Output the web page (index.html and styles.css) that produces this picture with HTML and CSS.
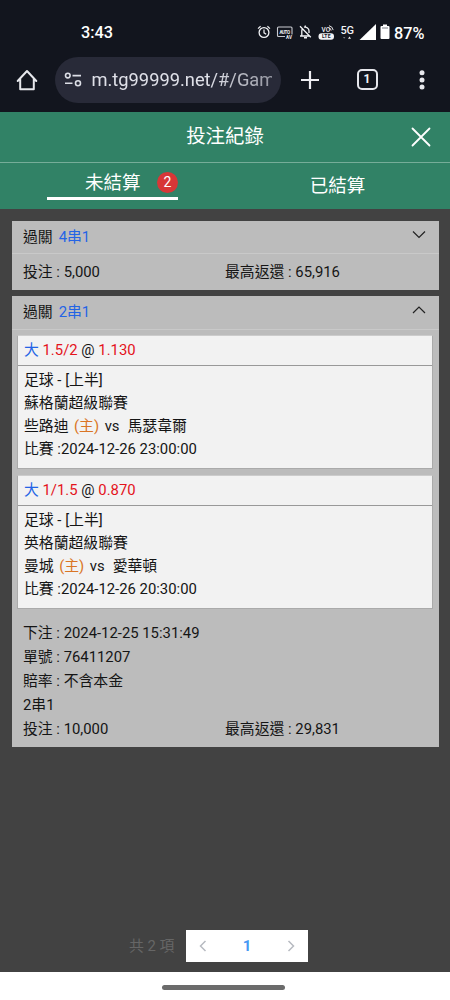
FILE: index.html
```html
<!DOCTYPE html>
<html lang="zh-Hant">
<head>
<meta charset="utf-8">
<title>投注紀錄</title>
<link rel="stylesheet" href="styles.css">
</head>
<body>
<div class="phone">
  <div class="status">
    <span class="clock">3:43</span>
    <svg class="status-icons" width="134" height="20" viewBox="0 0 134 20" fill="none" stroke="#f2f3f6">
      <circle cx="7" cy="10.500" r="4.900" stroke-width="1.300"/>
      <path d="M7 7.600v3.200l2.200 1.400M1 6.600l2.600-2.300M13 6.600l-2.600-2.300" stroke-width="1.200"/>
      <path d="M28 14.500H21.500q-1 0-1-1V6q0-1 1-1h12.500q1 0 1 1v6.500" stroke-width="1.100" stroke="#c9cbd1"/>
      <text x="22.500" y="11.600" class="tiny" textLength="10.500">AUTO</text>
      <text x="29" y="17" class="tiny" textLength="6">AV</text>
      <path d="M43 14h9.500M44.800 13.700V9c0-1.100.4-2 1-2.600M47 5.200c2.600-.6 5 1.200 5 3.800v2M48.300 3.500v1.400M43 4.300l10.800 11" stroke-width="1.300"/>
      <path d="M47 15.700h3" stroke-width="1.600"/>
      <text x="64.500" y="10.400" class="vo">VO</text>
      <path d="M71.500 5.700q2.300.3 2.700 2.800M72 3.700q3.500.6 4.200 4.400" stroke-width=".9"/>
      <rect x="61.500" y="11.300" width="15.500" height="6.400" rx="3" fill="#f2f3f6" stroke="none"/>
      <text x="65" y="16.400" class="lte" textLength="8.500">LTE</text>
      <text x="83.500" y="12" class="fiveg" textLength="13.500">5G</text>
      <path d="M86 15h2.400l-1.200 1.700z" fill="#777b83" stroke="none"/>
      <path d="M91 16.800h3l-1.500-2.200z" fill="#f2f3f6" stroke="none"/>
      <path d="M102.500 18L119 2v16z" fill="#fff" stroke="none"/>
      <path d="M126 2.500h4v1.600h1.500q1 0 1 1V16q0 1-1 1h-7q-1 0-1-1V5.100q0-1 1-1h1.500z" fill="#fff" stroke="none"/>
      <path d="M125 6h6" stroke="#777b83" stroke-width="1"/>
    </svg>
    <span class="percent">87%</span>
  </div>
  <div class="browser">
    <svg class="home" width="24" height="24" viewBox="0 0 24 24" fill="none" stroke="#e6e7ec" stroke-width="2" stroke-linejoin="round"><path d="M2.700 13L12 3l9.300 10M5.200 11v10.300h13.600V11" stroke-linecap="round"/></svg>
    <div class="address">
      <svg width="18" height="16" viewBox="0 0 18 16" fill="none" stroke="#dcdee6" stroke-width="1.600"><circle cx="3.800" cy="3.600" r="2.300"/><path d="M8.500 3.600H17M1 11.300h7.500"/><circle cx="14" cy="11.300" r="2.500"/></svg>
      <span class="url">m.tg99999.net/#/Gam</span>
    </div>
    <svg class="plus" width="20" height="20" viewBox="0 0 20 20" stroke="#eeeef2" stroke-width="2.200"><path d="M10 1v18M1 10h18"/></svg>
    <div class="tabcount">1</div>
    <svg class="dots" width="6" height="20" viewBox="0 0 6 20" fill="#e6e7ec"><circle cx="3" cy="2.800" r="2.500"/><circle cx="3" cy="9.900" r="2.500"/><circle cx="3" cy="17" r="2.500"/></svg>
  </div>
  <header class="title">
    <h1>投注紀錄</h1>
    <svg class="close" width="20" height="20" viewBox="0 0 20 20" stroke="#fff" stroke-width="1.800" stroke-linecap="round"><path d="M1.500 1.500l17 17M18.500 1.500l-17 17"/></svg>
  </header>
  <nav class="tabs">
    <div class="tab"><div class="tab-active"><span>未結算</span><b class="badge">2</b></div></div>
    <div class="tab tab-idle">已結算</div>
  </nav>
  <main class="content">
    <section class="card">
      <div class="card-head"><span>過關</span><span class="blue">4串1</span>
        <svg class="chevron" width="14" height="10" viewBox="0 0 14 10"><path d="M1 1.500L7 7.500 13 1.500"/></svg></div>
      <div class="stake"><span>投注 : 5,000</span><span>最高返還 : 65,916</span></div>
    </section>
    <section class="card">
      <div class="card-head card-head-open"><span>過關</span><span class="blue">2串1</span>
        <svg class="chevron" width="14" height="10" viewBox="0 0 14 10"><path d="M1 8L7 2 13 8"/></svg></div>
      <div class="tickets">
        <article class="ticket">
          <div class="pick"><span class="blue">大</span> <span class="red">1.5/2</span> @ <span class="red">1.130</span></div>
          <div class="match">
            <p>足球 - [上半]</p>
            <p>蘇格蘭超級聯賽</p>
            <p>些路迪<span class="host">(主)</span>vs<span class="away">馬瑟韋爾</span></p>
            <p>比賽 :2024-12-26 23:00:00</p>
          </div>
        </article>
        <article class="ticket">
          <div class="pick"><span class="blue">大</span> <span class="red">1/1.5</span> @ <span class="red">0.870</span></div>
          <div class="match">
            <p>足球 - [上半]</p>
            <p>英格蘭超級聯賽</p>
            <p>曼城<span class="host">(主)</span>vs<span class="away">愛華頓</span></p>
            <p>比賽 :2024-12-26 20:30:00</p>
          </div>
        </article>
      </div>
      <div class="details">
        <p>下注 : 2024-12-25 15:31:49</p>
        <p>單號 : 76411207</p>
        <p>賠率 : 不含本金</p>
        <p>2串1</p>
        <p class="totals"><span>投注 : 10,000</span><span>最高返還 : 29,831</span></p>
      </div>
    </section>
  </main>
  <footer class="pager">
    <span class="count">共 2 項</span>
    <div class="pages">
      <svg width="8" height="12" viewBox="0 0 8 12"><path d="M6.500 1L1.500 6l5 5"/></svg>
      <b>1</b>
      <svg width="8" height="12" viewBox="0 0 8 12"><path d="M1.500 1l5 5-5 5"/></svg>
    </div>
  </footer>
  <div class="gesture"><div class="handle"></div></div>
</div>
</body>
</html>
```
FILE: styles.css
```css
* { box-sizing: border-box; }
body, p, h1 { margin: 0; }
body {
  background: #424242;
  color: #151515;
  font-family: Roboto, "Noto Sans CJK TC", sans-serif;
  font-size: 14.850px;
}
.phone { width: 450px; height: 1000px; display: flex; flex-direction: column; overflow: hidden; }
svg { flex: none; display: block; }

.status { height: 52px; background: #12151e; color: #fff; display: flex; align-items: center; padding: 12px 0 0 81px; }
.clock { width: 176px; padding-top: 1px; font: 500 16.300px/20px Roboto, sans-serif; }
.percent { margin-left: 3px; padding-top: 2px; font-size: 16.300px; font-weight: 500; }
.tiny { font: 700 4.500px Roboto, sans-serif; fill: #f2f3f6; stroke: none; }
.vo { font: 500 6.500px Roboto, sans-serif; fill: #f2f3f6; stroke: none; }
.lte { font: 700 5px Roboto, sans-serif; fill: #12151e; stroke: none; }
.fiveg { font: 500 11px Roboto, sans-serif; fill: #f2f3f6; stroke: none; }

.browser { height: 60px; background: #12151e; display: flex; align-items: center; padding: 0 0 5px 15px; }
.address { width: 226px; height: 46px; margin-left: 15.500px; padding: 0 9px; border-radius: 23px; background: #282a38; display: flex; align-items: center; gap: 10px; color: #dfe0e8; }
.url { width: 180px; overflow: hidden; white-space: nowrap; font-size: 18.300px; line-height: 26px; -webkit-mask-image: linear-gradient(90deg, #000 65%, rgba(0, 0, 0, .6)); }
.plus { margin-left: 19.500px; }
.tabcount { width: 21px; height: 21px; margin-left: 36.500px; border: 2px solid #e6e7ec; border-radius: 5px; color: #f3f3f6; font: 700 12px/17px Roboto, sans-serif; text-align: center; }
.dots { margin-left: 41.500px; }

.title { height: 51px; background: #318266; border-bottom: 1.500px solid #76ad99; color: #fff; display: grid; grid-template-columns: 1fr auto 1fr; align-items: center; }
.title h1 { grid-column: 2; font-size: 19.400px; font-weight: 400; line-height: 28px; padding-bottom: 1px; }
.close { justify-self: end; margin-right: 19.500px; }
.tabs { height: 46px; background: #318266; color: #fff; font-size: 18.500px; display: grid; grid-template-columns: 1fr 1fr; }
.tab { display: flex; justify-content: center; }
.tab-active { width: 131px; height: 37px; border-bottom: 3px solid #fff; display: flex; align-items: center; padding: 4px 0 0 38px; }
.tab-active span { padding-bottom: 2px; }
.tab-idle { line-height: 46px; }
.badge { width: 21px; height: 21px; margin-left: auto; border-radius: 50%; background: #d73737; font-size: 14px; font-weight: 400; line-height: 21px; text-align: center; }

.content { flex: 1; padding: 11.500px 11px 0 12px; }
.card { background: #bcbcbc; margin-bottom: 6px; }
.card-head { height: 33.500px; border-bottom: 1px solid #c9c9c9; display: flex; align-items: center; gap: 6px; padding: 0 13px 2px 11px; }
.card-head-open { padding-bottom: 3px; }
.chevron { margin-left: auto; margin-bottom: 2px; fill: none; stroke: #222; stroke-width: 1.200; }
.blue { color: #2464e5; }
.red { color: #e4131b; }
.stake { height: 36px; }
.stake, .totals { display: grid; grid-template-columns: 202px 1fr; align-items: center; }
.stake { padding: 0 0 3px 11px; }
.tickets { padding: 5.500px 6px 0 5px; display: flex; flex-direction: column; gap: 6px; }
.ticket { height: 134px; background: #f2f2f2; border: 1px solid #aaa; border-top-color: #ccc; }
.pick { height: 29.500px; border-bottom: 1px solid #999; padding-left: 6px; line-height: 29px; }
.match { padding: 3px 6px; line-height: 23px; }
.match p { height: 23px; white-space: nowrap; }
.host { color: #da7525; margin: 0 5.500px; }
.away { margin-left: 8px; }
.details { height: 138px; padding: 12px 0 0 11px; line-height: 24px; }
.details p { height: 24px; }

.pager { height: 42px; display: flex; padding-left: 129px; }
.count { width: 57px; color: #666; line-height: 32px; }
.pages { width: 122px; height: 32px; background: #fff; display: flex; align-items: center; justify-content: space-between; padding: 0 13px; }
.pages b { color: #4798f3; font-size: 15px; }
.pages svg { fill: none; stroke: #b7bac1; stroke-width: 1.500; }
.gesture { height: 28px; background: #fff; display: flex; justify-content: center; padding: 13px 3px 0 0; }
.handle { width: 123px; height: 5px; border-radius: 3px; background: #6b6b6b; }
```
